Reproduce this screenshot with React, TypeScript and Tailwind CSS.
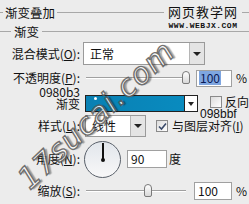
import React from 'react';

const font = { fontFamily: '"Noto Sans CJK SC", "Liberation Sans", sans-serif' };

function Arrow() {
  return (
    <div className="flex h-full w-[15px] items-center justify-center border-l border-[#b5b5b5] bg-[#e4e4e4]">
      <div className="h-0 w-0 border-x-[4px] border-t-[4px] border-x-transparent border-t-[#222]" />
    </div>
  );
}

function Thumb() {
  return (
    <div className="h-[13px] w-[8px] rounded-t-[4px] rounded-b-[2px] border border-[#7a7a7a] bg-gradient-to-b from-white to-[#d8d8d8]" />
  );
}

function Check({ checked }: { checked?: boolean }) {
  return (
    <div className="flex h-[12px] w-[12px] items-center justify-center border border-[#8a8a8a] bg-gradient-to-br from-[#dcdcdc] to-white">
      {checked && (
        <svg width="9" height="9" viewBox="0 0 9 9">
          <path d="M1 4.5 L3.5 7 L8 1.5" stroke="#3a4a6a" strokeWidth="1.6" fill="none" />
        </svg>
      )}
    </div>
  );
}

function Label({ children }: { children: React.ReactNode }) {
  return <div className="w-[82px] shrink-0 pr-[2px] text-right">{children}</div>;
}

export default function App() {
  return (
    <div
      className="relative h-[204px] w-[249px] overflow-hidden bg-[#ececec] text-[12px] leading-[14px] text-[#111]"
      style={font}
    >
      {/* title */}
      <div className="mt-[5px] flex h-[15px] items-center">
        <div className="h-px w-[3px] bg-[#a8a8a8]" />
        <div className="px-[2px] text-[12.5px]">渐变叠加</div>
        <div className="h-px flex-1 bg-[#a8a8a8]" />
      </div>

      {/* group */}
      <div className="mt-[4px] flex h-[15px] items-center">
        <div className="h-px w-[11px] bg-[#a8a8a8]" />
        <div className="px-[3px] text-[12.5px]">渐变</div>
        <div className="h-px flex-1 bg-[#a8a8a8]" />
      </div>

      {/* blend mode */}
      <div className="mt-[3px] flex h-[23px] items-center">
        <Label>
          混合模式(<span className="underline">O</span>):
        </Label>
        <div className="ml-[1px] flex h-[23px] w-[122px] items-center border border-[#9a9a9a] bg-white">
          <div className="flex-1 pl-[6px]">正常</div>
          <Arrow />
        </div>
      </div>

      {/* opacity */}
      <div className="mt-[5px] flex h-[16px] items-center">
        <Label>
          不透明度(<span className="underline">P</span>):
        </Label>
        <div className="relative ml-[4px] flex h-[16px] w-[104px] items-center">
          <div className="h-[2px] w-full border-t border-[#a0a0a0] border-b border-b-white" />
          <div className="absolute left-[96px] top-[1px]">
            <Thumb />
          </div>
        </div>
        <div className="ml-[6px] flex h-[17px] w-[36px] items-center border border-[#a0a0a0] bg-white pl-[2px]">
          <span className="bg-[#7fa6e0] px-[1px] text-[#0b1a55]">100</span>
        </div>
        <div className="ml-[4px]">%</div>
      </div>

      {/* gradient */}
      <div className="flex h-[29px] items-start">
        <Label>
          <div className="leading-[11px]">0980b3</div>
          <div className="leading-[13px]">渐变</div>
        </Label>
        <div className="ml-[3px] mt-[9px] flex h-[17px] w-[120px] border border-[#222] bg-white">
          <div className="relative flex-1 bg-gradient-to-r from-[#0980b3] to-[#098bbf]">
            <div className="absolute left-[8px] top-[1px] h-[3px] w-[3px] rounded-full bg-white" />
          </div>
          <div className="flex w-[13px] items-center justify-center border-l border-[#222]">
            <div className="h-0 w-0 border-x-[3px] border-t-[4px] border-x-transparent border-t-[#222]" />
          </div>
        </div>
        <div className="ml-[2px] mt-[9px] flex flex-col items-start">
          <div className="ml-[10px] flex items-center gap-[3px]">
            <Check />
            <span className="whitespace-nowrap">反向</span>
          </div>
          <div className="mt-[-1px] text-[12px] leading-[12px]" style={{ fontFamily: '"Liberation Sans", sans-serif' }}>
            098bbf
          </div>
        </div>
      </div>

      {/* style */}
      <div className="flex h-[22px] items-center">
        <Label>
          样式(<span className="underline">L</span>):
        </Label>
        <div className="ml-[3px] flex h-[22px] w-[61px] items-center border border-[#9a9a9a] bg-white">
          <div className="flex-1 pl-[6px]">线性</div>
          <Arrow />
        </div>
        <div className="ml-[10px] flex items-center gap-[4px]">
          <Check checked />
          <span className="whitespace-nowrap">
            与图层对齐(<span className="underline">I</span>)
          </span>
        </div>
      </div>

      {/* angle */}
      <div className="mt-[3px] flex h-[38px] items-center">
        <Label>
          角度(<span className="underline">N</span>):
        </Label>
        <div className="relative ml-[2px] h-[37px] w-[37px] rounded-full border border-[#59606a] bg-gradient-to-b from-[#e2e6ec] to-[#f8f8f8]">
          <div className="absolute left-[17px] top-[1px] h-[17px] w-[2px] bg-[#111]" />
          <div className="absolute left-[16px] top-[16px] h-[4px] w-[4px] rounded-full bg-[#111]" />
        </div>
        <div className="ml-[6px] flex h-[18px] w-[40px] items-center border border-[#a0a0a0] bg-white pl-[3px]">
          90
        </div>
        <div className="ml-[2px]">度</div>
      </div>

      {/* scale */}
      <div className="mt-[4px] flex h-[18px] items-center">
        <Label>
          缩放(<span className="underline">S</span>):
        </Label>
        <div className="relative ml-[4px] flex h-[16px] w-[100px] items-center">
          <div className="h-[2px] w-full border-t border-[#a0a0a0] border-b border-b-white" />
          <div className="absolute left-[58px] top-[1px]">
            <Thumb />
          </div>
        </div>
        <div className="ml-[8px] flex h-[18px] w-[38px] items-center border border-[#a0a0a0] bg-white pl-[3px]">
          100
        </div>
        <div className="ml-[4px]">%</div>
      </div>

      {/* site watermark */}
      <div className="absolute left-[164px] top-[4px] flex flex-col items-center bg-[#ececec]">
        <div className="px-[4px] text-[13px] leading-[15px] tracking-[1px] text-[#111]">网页教学网</div>
        <div
          className="mt-[3px] bg-[#ececec] px-[1px] text-[8px] font-bold leading-[8px] tracking-[0.5px] text-[#111]"
          style={{ fontFamily: '"Liberation Mono", monospace' }}
        >
          WWW.WEBJX.COM
        </div>
      </div>

      {/* diagonal watermark */}
      <div
        className="pointer-events-none absolute left-[-4px] top-[108px] origin-center -rotate-[43deg] whitespace-nowrap text-[30px] italic tracking-[1px] text-white"
        style={{
          fontFamily: '"DejaVu Sans", sans-serif',
          WebkitTextStroke: '1.4px #5a5a5a',
          textShadow: '2px 2px 1px rgba(0,0,0,0.4)',
          opacity: 0.85,
        }}
      >
        17sucai.com
      </div>
    </div>
  );
}
